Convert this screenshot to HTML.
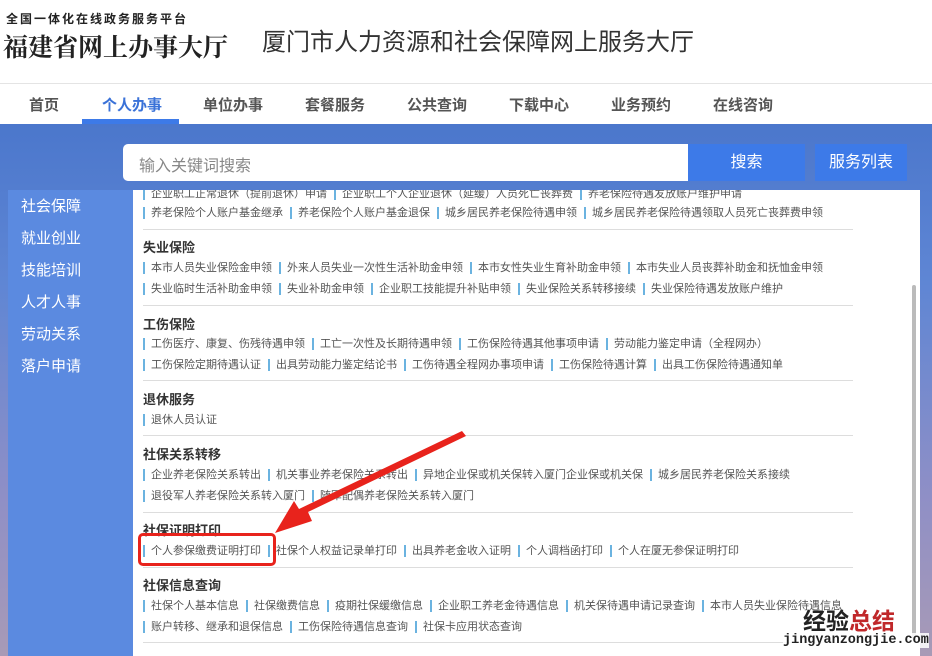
<!DOCTYPE html>
<html><head><meta charset="utf-8"><style>
*{margin:0;padding:0;box-sizing:border-box}
body{width:932px;height:656px;overflow:hidden;position:relative;background:#fff;font-family:"Liberation Sans","Noto Sans CJK SC",sans-serif}
.a{position:absolute;white-space:nowrap}
.nav{top:94px;font-size:15px;font-weight:bold;color:#555}
.bg{left:0;top:124px;width:932px;height:532px;background:linear-gradient(180deg,#4b77cc 0%,#5f86d4 30%,#8f8fc6 70%,#a89ab6 100%)}
.side{left:8px;top:190px;width:126px;height:466px;background:#5b8ae0}
.side div{position:absolute;left:13px;color:#fff;font-size:15px}
.panel{left:133px;top:190px;width:787px;height:466px;background:#fff;overflow:hidden}
.h{position:absolute;left:10px;font-size:13px;font-weight:bold;color:#333}
.r{position:absolute;left:10px;font-size:11px;color:#555;white-space:nowrap}
.r span{border-left:2px solid #6bb3e0;padding:0 6px 0 6px;margin-right:1px}
.sep{position:absolute;left:10px;width:710px;height:1px;background:#ddd}
</style></head><body>
<div class="a" style="left:6px;top:10px;font-size:12px;font-weight:bold;letter-spacing:2px;color:#222">全国一体化在线政务服务平台</div>
<div class="a" style="left:3px;top:28px;font-size:25px;font-weight:bold;color:#222;font-family:'Liberation Serif','Noto Serif CJK SC',serif">福建省网上办事大厅</div>
<div class="a" style="left:262px;top:22px;font-size:24px;color:#333">厦门市人力资源和社会保障网上服务大厅</div>
<div class="a" style="left:0;top:83px;width:932px;height:1px;background:#e4e4e4"></div>
<div class="a nav" style="left:29px">首页</div>
<div class="a nav" style="left:102px;color:#3a72d8">个人办事</div>
<div class="a" style="left:82px;top:119px;width:97px;height:5px;background:#3d7ae8"></div>
<div class="a nav" style="left:203px">单位办事</div>
<div class="a nav" style="left:305px">套餐服务</div>
<div class="a nav" style="left:407px">公共查询</div>
<div class="a nav" style="left:509px">下载中心</div>
<div class="a nav" style="left:611px">业务预约</div>
<div class="a nav" style="left:713px">在线咨询</div>
<div class="a bg"></div>
<div class="a" style="left:123px;top:144px;width:566px;height:37px;background:#fff;border-radius:5px 0 0 5px;font-size:16px;color:#888;padding:8px 16px">输入关键词搜索</div>
<div class="a" style="left:688px;top:144px;width:117px;height:37px;background:#3d7ae8;color:#fff;font-size:16px;text-align:center;line-height:37px">搜索</div>
<div class="a" style="left:815px;top:144px;width:92px;height:37px;background:#3d7ae8;color:#fff;font-size:16px;text-align:center;line-height:37px">服务列表</div>
<div class="a side">
<div style="top:5px">社会保障</div><div style="top:37px">就业创业</div><div style="top:69px">技能培训</div><div style="top:101px">人才人事</div><div style="top:133px">劳动关系</div><div style="top:165px">落户申请</div>
</div>
<div class="a panel">
<div class="r" style="top:-5px"><span>企业职工正常退休（提前退休）申请</span><span>企业职工个人企业退休（延缓）人员死亡丧葬费</span><span>养老保险待遇发放账户维护申请</span></div>
<div class="r" style="top:14px"><span>养老保险个人账户基金继承</span><span>养老保险个人账户基金退保</span><span>城乡居民养老保险待遇申领</span><span>城乡居民养老保险待遇领取人员死亡丧葬费申领</span></div>
<div class="sep" style="top:39px"></div>
<div class="h" style="top:47px">失业保险</div>
<div class="r" style="top:69px"><span>本市人员失业保险金申领</span><span>外来人员失业一次性生活补助金申领</span><span>本市女性失业生育补助金申领</span><span>本市失业人员丧葬补助金和抚恤金申领</span></div>
<div class="r" style="top:90px"><span>失业临时生活补助金申领</span><span>失业补助金申领</span><span>企业职工技能提升补贴申领</span><span>失业保险关系转移接续</span><span>失业保险待遇发放账户维护</span></div>
<div class="sep" style="top:115px"></div>
<div class="h" style="top:124px">工伤保险</div>
<div class="r" style="top:145px"><span>工伤医疗、康复、伤残待遇申领</span><span>工亡一次性及长期待遇申领</span><span>工伤保险待遇其他事项申请</span><span>劳动能力鉴定申请（全程网办）</span></div>
<div class="r" style="top:166px"><span>工伤保险定期待遇认证</span><span>出具劳动能力鉴定结论书</span><span>工伤待遇全程网办事项申请</span><span>工伤保险待遇计算</span><span>出具工伤保险待遇通知单</span></div>
<div class="sep" style="top:190px"></div>
<div class="h" style="top:199px">退休服务</div>
<div class="r" style="top:221px"><span>退休人员认证</span></div>
<div class="sep" style="top:245px"></div>
<div class="h" style="top:254px">社保关系转移</div>
<div class="r" style="top:276px"><span>企业养老保险关系转出</span><span>机关事业养老保险关系转出</span><span>异地企业保或机关保转入厦门企业保或机关保</span><span>城乡居民养老保险关系接续</span></div>
<div class="r" style="top:297px"><span>退役军人养老保险关系转入厦门</span><span>随军配偶养老保险关系转入厦门</span></div>
<div class="sep" style="top:322px"></div>
<div class="h" style="top:330px">社保证明打印</div>
<div class="r" style="top:352px"><span>个人参保缴费证明打印</span><span>社保个人权益记录单打印</span><span>出具养老金收入证明</span><span>个人调档函打印</span><span>个人在厦无参保证明打印</span></div>
<div class="sep" style="top:377px"></div>
<div class="h" style="top:385px">社保信息查询</div>
<div class="r" style="top:407px"><span>社保个人基本信息</span><span>社保缴费信息</span><span>疫期社保缓缴信息</span><span>企业职工养老金待遇信息</span><span>机关保待遇申请记录查询</span><span>本市人员失业保险待遇信息</span></div>
<div class="r" style="top:428px"><span>账户转移、继承和退保信息</span><span>工伤保险待遇信息查询</span><span>社保卡应用状态查询</span></div>
<div class="sep" style="top:452px"></div>
<div style="position:absolute;left:779px;top:95px;width:4px;height:355px;background:#bbb;border-radius:2px"></div>
</div>
<div class="a" style="left:138px;top:533px;width:138px;height:33px;border:3px solid #e8231c;border-radius:5px"></div>
<svg class="a" style="left:0;top:0" width="932" height="656"><polygon points="466,436 308,512 312,521 275,533 294,501 299,509 462,431" fill="#e8231c"/></svg>
<div class="a" style="left:803px;top:602px;font-size:23px;font-weight:bold;color:#222">经验<span style="color:#c0282a">总结</span></div>
<div class="a" style="left:783px;top:633px;font-size:13.5px;color:#222;font-family:'Liberation Mono',monospace;font-weight:bold;background:rgba(255,255,255,.85)">jingyanzongjie.com</div>
</body></html>
